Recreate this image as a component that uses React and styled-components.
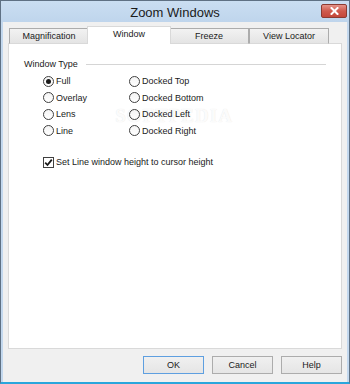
import React from 'react';
import styled, { createGlobalStyle } from 'styled-components';

const GlobalStyle = createGlobalStyle`
html, body {
  margin: 0;
  padding: 0;
  background: #ffffff;
}
body {
  font-family: "Liberation Sans", Arial, sans-serif;
}
`;

const Window = styled.div`
  width: 350px;
  height: 384px;
  box-sizing: border-box;
  display: flex;
  flex-direction: column;
  background: #c3d8ee;
  border: 1px solid #5f7184;
  border-bottom: 2px solid #2aa6dc;
`;

const TitleBar = styled.div`
  height: 21px;
  display: grid;
  grid-template-columns: 1fr auto 1fr;
  align-items: center;
  background: linear-gradient(180deg, #cadef2 0%, #bfd5ec 100%);
`;

const Title = styled.div`
  grid-column: 2;
  font-size: 13px;
  color: #1b1b1b;
  padding-top: 1px;
`;

const CloseButton = styled.div`
  grid-column: 3;
  justify-self: end;
  align-self: start;
  margin-top: 3px;
  margin-right: 2px;
  width: 26px;
  height: 14px;
  box-sizing: border-box;
  border: 1px solid #8c3b32;
  border-radius: 2px;
  background: linear-gradient(180deg, #e5948a 0%, #cf5a4d 50%, #c4483b 100%);
  display: flex;
  align-items: center;
  justify-content: center;
`;

const Client = styled.div`
  flex: 1;
  margin: 0 2px;
  background: #f0f0f0;
  padding: 5px 5px 0 5px;
  display: flex;
  flex-direction: column;
`;

const TabStrip = styled.div`
  height: 17px;
  display: flex;
  align-items: flex-end;
  padding-left: 1px;
  position: relative;
  z-index: 1;
  margin-bottom: -1px;
`;

const Tab = styled.div`
  box-sizing: border-box;
  width: ${(p) => (p.$active ? '84px' : '80px')};
  height: ${(p) => (p.$active ? '18px' : '16px')};
  margin: 0 ${(p) => (p.$active ? '-2px' : '0')};
  position: relative;
  z-index: ${(p) => (p.$active ? 2 : 1)};
  display: flex;
  align-items: center;
  justify-content: center;
  padding-bottom: ${(p) => (p.$active ? '3px' : '0')};
  font-size: 9px;
  color: #1a1a1a;
  border: 1px solid ${(p) => (p.$active ? '#d9d9d9' : '#acacac')};
  border-bottom: ${(p) => (p.$active ? 'none' : '1px solid #d9d9d9')};
  background: ${(p) =>
    p.$active ? '#ffffff' : 'linear-gradient(180deg, #f2f2f2 0%, #e4e4e4 100%)'};
`;

const Panel = styled.div`
  position: relative;
  height: 306px;
  box-sizing: border-box;
  border: 1px solid #d9d9d9;
  background: #ffffff;
  padding: 14px 15px 0 15px;
  display: flex;
  flex-direction: column;
`;

const GroupHeader = styled.div`
  height: 12px;
  display: flex;
  align-items: center;
  gap: 8px;
  font-size: 9px;
  color: #1a1a1a;
`;

const GroupLine = styled.div`
  flex: 1;
  height: 1px;
  background: #d5d5d5;
`;

const RadioGrid = styled.div`
  margin-top: 3px;
  padding-left: 19px;
  display: grid;
  grid-template-columns: 86px auto;
  grid-auto-flow: column;
  grid-template-rows: repeat(4, 16.5px);
`;

const Option = styled.label`
  display: flex;
  align-items: center;
  gap: 2px;
  font-size: 9px;
  color: #1a1a1a;
  white-space: nowrap;
  position: relative;
  z-index: 1;
`;

const RadioCircle = styled.span`
  width: 11px;
  height: 11px;
  box-sizing: border-box;
  border-radius: 50%;
  border: 1px solid #404040;
  background: linear-gradient(180deg, #f4f4f4 0%, #ffffff 100%);
  display: flex;
  align-items: center;
  justify-content: center;
  &::after {
    content: '';
    width: 5px;
    height: 5px;
    border-radius: 50%;
    background: ${(p) => (p.$checked ? '#1a1a1a' : 'transparent')};
  }
`;

const CheckRow = styled(Option)`
  margin-top: 15px;
  padding-left: 19px;
  height: 16px;
`;

const CheckBox = styled.span`
  width: 11px;
  height: 11px;
  box-sizing: border-box;
  border: 1px solid #404040;
  background: #ffffff;
  display: flex;
  align-items: center;
  justify-content: center;
`;

const Watermark = styled.div`
  position: absolute;
  left: 104px;
  top: 62px;
  width: 122px;
  display: flex;
  flex-direction: column;
  align-items: center;
  pointer-events: none;
`;

const WatermarkBig = styled.div`
  font-family: "Liberation Serif", serif;
  font-size: 19px;
  font-weight: bold;
  letter-spacing: 1px;
  line-height: 20px;
  color: rgba(255, 255, 255, 0.9);
  text-shadow: 0 0 1px rgba(0, 0, 0, 0.12);
`;

const WatermarkSmall = styled.div`
  font-size: 6px;
  line-height: 8px;
  margin-top: 1px;
  color: rgba(0, 0, 0, 0.06);
`;

const ButtonRow = styled.div`
  margin-top: 7px;
  display: flex;
  justify-content: flex-end;
  gap: 8px;
`;

const Button = styled.div`
  width: 61px;
  height: 18px;
  box-sizing: border-box;
  display: flex;
  align-items: center;
  justify-content: center;
  font-size: 9px;
  color: #1a1a1a;
  border: 1px solid ${(p) => (p.$default ? '#5e9fe0' : '#acacac')};
  background: linear-gradient(180deg, #f0f0f0 0%, #e5e5e5 100%);
`;

const tabs = ['Magnification', 'Window', 'Freeze', 'View Locator'];
const radios = [
  { label: 'Full', checked: true },
  { label: 'Overlay' },
  { label: 'Lens' },
  { label: 'Line' },
  { label: 'Docked Top' },
  { label: 'Docked Bottom' },
  { label: 'Docked Left' },
  { label: 'Docked Right' },
];

const App = () => {
  return (
    <>
      <GlobalStyle />
      <Window>
        <TitleBar>
          <Title>Zoom Windows</Title>
          <CloseButton>
            <svg width="9" height="8" viewBox="0 0 9 8">
              <path d="M1.5 1 L7.5 7 M7.5 1 L1.5 7" stroke="#ffffff" strokeWidth="2" strokeLinecap="square" />
            </svg>
          </CloseButton>
        </TitleBar>
        <Client>
          <TabStrip>
            {tabs.map((t) => (
              <Tab key={t} $active={t === 'Window'}>{t}</Tab>
            ))}
          </TabStrip>
          <Panel>
            <GroupHeader>
              Window Type
              <GroupLine />
            </GroupHeader>
            <RadioGrid>
              {radios.map((r) => (
                <Option key={r.label}>
                  <RadioCircle $checked={r.checked} />
                  {r.label}
                </Option>
              ))}
            </RadioGrid>
            <CheckRow>
              <CheckBox>
                <svg width="9" height="9" viewBox="0 0 9 9">
                  <path d="M1.2 4.6 L3.5 7 L7.8 1.6" stroke="#1a1a1a" strokeWidth="1.8" fill="none" />
                </svg>
              </CheckBox>
              Set Line window height to cursor height
            </CheckRow>
            <Watermark>
              <WatermarkBig>SOFTPEDIA</WatermarkBig>
              <WatermarkSmall>www.softpedia.com</WatermarkSmall>
            </Watermark>
          </Panel>
          <ButtonRow>
            <Button $default>OK</Button>
            <Button>Cancel</Button>
            <Button>Help</Button>
          </ButtonRow>
        </Client>
      </Window>
    </>
  );
};

export default App;
